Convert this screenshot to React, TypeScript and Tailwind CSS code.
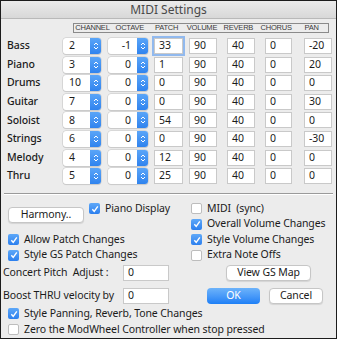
import React from "react";

type Row = {
  name: string;
  channel: string;
  octave: string;
  patch: string;
  volume: string;
  reverb: string;
  chorus: string;
  pan: string;
};

const rows: Row[] = [
  { name: "Bass", channel: "2", octave: "-1", patch: "33", volume: "90", reverb: "40", chorus: "0", pan: "-20" },
  { name: "Piano", channel: "3", octave: "0", patch: "1", volume: "90", reverb: "40", chorus: "0", pan: "20" },
  { name: "Drums", channel: "10", octave: "0", patch: "0", volume: "90", reverb: "40", chorus: "0", pan: "0" },
  { name: "Guitar", channel: "7", octave: "0", patch: "0", volume: "90", reverb: "40", chorus: "0", pan: "30" },
  { name: "Soloist", channel: "8", octave: "0", patch: "54", volume: "90", reverb: "40", chorus: "0", pan: "0" },
  { name: "Strings", channel: "6", octave: "0", patch: "0", volume: "90", reverb: "40", chorus: "0", pan: "-30" },
  { name: "Melody", channel: "4", octave: "0", patch: "12", volume: "90", reverb: "40", chorus: "0", pan: "0" },
  { name: "Thru", channel: "5", octave: "0", patch: "25", volume: "90", reverb: "40", chorus: "0", pan: "0" },
];

function Stepper() {
  return (
    <div className="flex h-full w-[11px] items-center justify-center rounded-r-[3px] bg-gradient-to-b from-[#5aa5f8] to-[#2f83ee]">
      <svg width="6" height="10" viewBox="0 0 6 10" fill="none" stroke="white" strokeWidth="1">
        <path d="M1 4 L3 2 L5 4" />
        <path d="M1 6 L3 8 L5 6" />
      </svg>
    </div>
  );
}

function Combo({ value, align, width }: { value: string; align: "left" | "right"; width: string }) {
  return (
    <div className={`flex h-[16px] ${width} rounded-[3px] bg-white shadow-[0_0_0_0.5px_#c4c4c4,0_1px_1px_rgba(0,0,0,0.12)]`}>
      <div className={`flex flex-1 items-center px-[6px] ${align === "right" ? "justify-end" : "justify-start"}`}>
        {value}
      </div>
      <Stepper />
    </div>
  );
}

function Field({ value, width, focused }: { value: string; width: string; focused?: boolean }) {
  return (
    <div
      className={`flex h-[16px] ${width} items-center border border-[#c9c9c9] bg-white pl-[4px] ${
        focused ? "ring-[2px] ring-[#91b9ee]" : ""
      }`}
    >
      {value}
    </div>
  );
}

function Check({ checked, label }: { checked?: boolean; label: string }) {
  return (
    <div className="flex h-[15px] items-center gap-[5px] whitespace-pre">
      {checked ? (
        <div className="flex h-[11px] w-[11px] shrink-0 items-center justify-center rounded-[2px] bg-gradient-to-b from-[#5ea8f8] to-[#2b7fee]">
          <svg width="8" height="8" viewBox="0 0 8 8" fill="none" stroke="white" strokeWidth="1.4">
            <path d="M1.3 4.3 L3.2 6.3 L6.8 1.3" />
          </svg>
        </div>
      ) : (
        <div className="h-[11px] w-[11px] shrink-0 rounded-[2px] border border-[#bdbdbd] bg-white" />
      )}
      <span>{label}</span>
    </div>
  );
}

function Button({ label, width, primary }: { label: string; width: string; primary?: boolean }) {
  return (
    <div
      className={`flex h-[16px] ${width} items-center justify-center rounded-[4px] ${
        primary
          ? "bg-gradient-to-b from-[#6db3fa] to-[#1c7ff6] text-white"
          : "border border-[#c6c6c6] bg-white shadow-[0_1px_1px_rgba(0,0,0,0.1)]"
      }`}
    >
      {label}
    </div>
  );
}

const headers = [
  { label: "CHANNEL", w: "w-[37px]" },
  { label: "OCTAVE", w: "w-[38px]" },
  { label: "PATCH", w: "w-[36px]" },
  { label: "VOLUME", w: "w-[35px]" },
  { label: "REVERB", w: "w-[38px]" },
  { label: "CHORUS", w: "w-[38px]" },
  { label: "PAN", w: "w-[33px]" },
];

export default function App() {
  return (
    <div
      className="flex h-[339px] w-[337px] flex-col overflow-hidden border border-[#1c1c1c] bg-[#ececec] text-[10.5px] tracking-[-0.1px] text-[#1b1b1b]"
      style={{ fontFamily: '"Noto Sans", "Liberation Sans", sans-serif' }}
    >
      <div className="flex h-[18px] shrink-0 items-center justify-center border-b border-[#b9b9b9] bg-gradient-to-b from-[#ebebeb] to-[#d8d8d8] text-[12px] tracking-normal text-[#4a4a4a]">
        MIDI Settings
      </div>

      <div
        className="ml-[72px] mt-[4px] flex h-[10px] w-[256px] items-center border border-[#8a8a8a] text-[7.5px] leading-none tracking-[-0.2px] text-[#3a3a3a]"
        style={{ fontFamily: '"Liberation Sans", sans-serif' }}
      >
        {headers.map((h) => (
          <div key={h.label} className={`${h.w} text-center`}>
            {h.label}
          </div>
        ))}
      </div>

      <div className="mt-[5px] flex flex-col gap-[2.6px]">
        {rows.map((r, i) => (
          <div key={r.name} className="flex h-[16px] items-center">
            <div className="w-[62px] pl-[6px] font-medium">{r.name}</div>
            <Combo value={r.channel} align="left" width="w-[38px]" />
            <div className="ml-[7px]">
              <Combo value={r.octave} align="right" width="w-[40px]" />
            </div>
            <div className="ml-[6px]">
              <Field value={r.patch} width="w-[29px]" focused={i === 0} />
            </div>
            <div className="ml-[6px]">
              <Field value={r.volume} width="w-[28px]" />
            </div>
            <div className="ml-[10px]">
              <Field value={r.reverb} width="w-[28px]" />
            </div>
            <div className="ml-[10px]">
              <Field value={r.chorus} width="w-[27px]" />
            </div>
            <div className="ml-[12px]">
              <Field value={r.pan} width="w-[28px]" />
            </div>
          </div>
        ))}
      </div>

      <div className="mx-[3px] mt-[9px] border-t border-b border-t-[#9a9a9a] border-b-white" />

      <div className="mt-[6px] flex">
        <div className="flex w-[190px] flex-col pl-[7px]">
          <div className="flex h-[31px] items-start">
            <div className="mt-[6px]">
              <Button label="Harmony.." width="w-[76px]" />
            </div>
            <div className="ml-[5px]">
              <Check checked label="Piano Display" />
            </div>
          </div>
          <div className="flex flex-col gap-[0.5px]">
            <Check checked label="Allow Patch Changes" />
            <Check checked label="Style GS Patch Changes" />
          </div>
        </div>
        <div className="flex flex-col gap-[0.5px]">
          <Check label="MIDI  (sync)" />
          <Check checked label="Overall Volume Changes" />
          <Check checked label="Style Volume Changes" />
          <Check label="Extra Note Offs" />
        </div>
      </div>

      <div className="mt-[2px] flex h-[17px] items-center pl-[2px]">
        <div className="w-[120px] whitespace-pre">Concert Pitch  Adjust :</div>
        <Field value="0" width="w-[46px]" />
        <div className="ml-[57px]">
          <Button label="View GS Map" width="w-[85px]" />
        </div>
      </div>

      <div className="mt-[6px] flex h-[17px] items-center pl-[2px]">
        <div className="w-[120px]">Boost THRU velocity by</div>
        <Field value="0" width="w-[46px]" />
        <div className="ml-[38px]">
          <Button label="OK" width="w-[53px]" primary />
        </div>
        <div className="ml-[9px]">
          <Button label="Cancel" width="w-[54px]" />
        </div>
      </div>

      <div className="mt-[1.5px] flex flex-col gap-[1px] pl-[7px]">
        <Check checked label="Style Panning, Reverb, Tone Changes" />
        <Check label="Zero the ModWheel Controller when stop pressed" />
      </div>
    </div>
  );
}
